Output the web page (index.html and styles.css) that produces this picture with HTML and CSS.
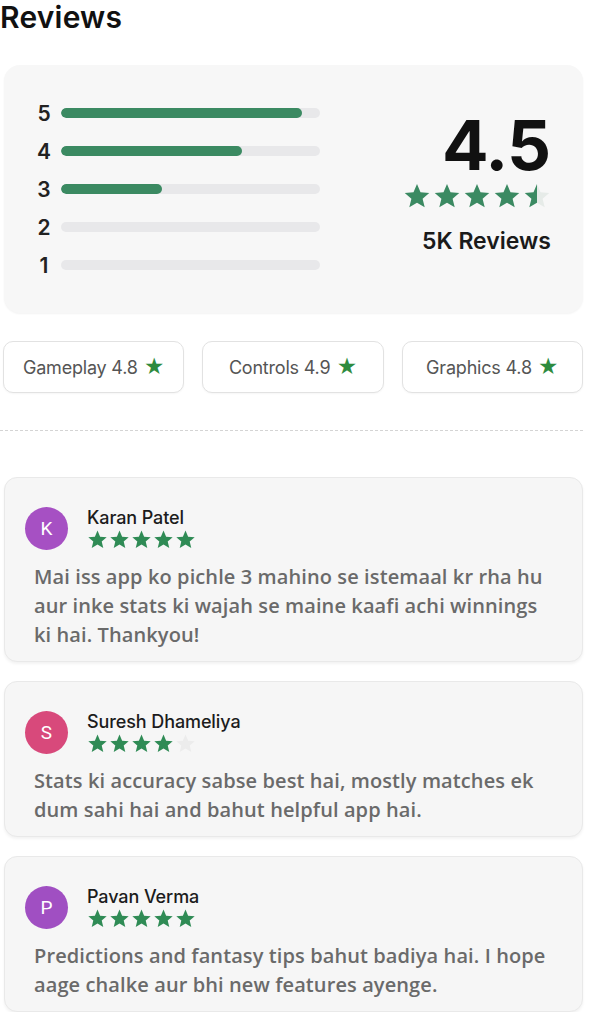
FILE: index.html
```html
<!DOCTYPE html>
<html>
<head>
  <meta charset="utf-8">
  <link rel="stylesheet" href="styles.css">
</head>
<body>
<svg width="0" height="0" class="defs">
  <defs>
    <symbol id="star" viewBox="0 0 24 24">
      <path d="M12 1.8l3 7 7.5.6-5.7 4.9 1.8 7.4L12 17.7l-6.6 4 1.8-7.4-5.7-4.9 7.5-.6z"/>
    </symbol>
    <linearGradient id="half">
      <stop offset="52%" stop-color="#3b8a62"/>
      <stop offset="52%" stop-color="#e6ebe8"/>
    </linearGradient>
  </defs>
</svg>

<div class="page">
  <h2 class="title">Reviews</h2>

  <!-- rating summary -->
  <div class="summary">
    <div class="bars">
      <div class="bar-row"><span class="num">5</span><div class="track"><div class="fill" style="width:93%"></div></div></div>
      <div class="bar-row"><span class="num">4</span><div class="track"><div class="fill" style="width:70%"></div></div></div>
      <div class="bar-row"><span class="num">3</span><div class="track"><div class="fill" style="width:39%"></div></div></div>
      <div class="bar-row"><span class="num">2</span><div class="track"></div></div>
      <div class="bar-row"><span class="num">1</span><div class="track"></div></div>
    </div>
    <div class="score">
      <div class="big">4.5</div>
      <div class="stars stars-big">
        <svg><use href="#star"/></svg>
        <svg><use href="#star"/></svg>
        <svg><use href="#star"/></svg>
        <svg><use href="#star"/></svg>
        <svg class="half"><use href="#star"/></svg>
      </div>
      <div class="count">5K Reviews</div>
    </div>
  </div>

  <!-- category chips -->
  <div class="chips">
    <div class="chip">Gameplay 4.8 <span class="chip-star">★</span></div>
    <div class="chip">Controls 4.9 <span class="chip-star">★</span></div>
    <div class="chip">Graphics 4.8 <span class="chip-star">★</span></div>
  </div>

  <hr class="divider">

  <!-- review list -->
  <div class="review">
    <div class="review-head">
      <div class="avatar purple">K</div>
      <div>
        <div class="name">Karan Patel</div>
        <div class="stars">
          <svg><use href="#star"/></svg><svg><use href="#star"/></svg><svg><use href="#star"/></svg><svg><use href="#star"/></svg><svg><use href="#star"/></svg>
        </div>
      </div>
    </div>
    <p class="text">Mai iss app ko pichle 3 mahino se istemaal kr rha hu aur inke stats ki wajah se maine kaafi achi winnings ki hai. Thankyou!</p>
  </div>

  <div class="review">
    <div class="review-head">
      <div class="avatar pink">S</div>
      <div>
        <div class="name">Suresh Dhameliya</div>
        <div class="stars">
          <svg><use href="#star"/></svg><svg><use href="#star"/></svg><svg><use href="#star"/></svg><svg><use href="#star"/></svg><svg class="off"><use href="#star"/></svg>
        </div>
      </div>
    </div>
    <p class="text">Stats ki accuracy sabse best hai, mostly matches ek dum sahi hai and bahut helpful app hai.</p>
  </div>

  <div class="review">
    <div class="review-head">
      <div class="avatar violet">P</div>
      <div>
        <div class="name">Pavan Verma</div>
        <div class="stars">
          <svg><use href="#star"/></svg><svg><use href="#star"/></svg><svg><use href="#star"/></svg><svg><use href="#star"/></svg><svg><use href="#star"/></svg>
        </div>
      </div>
    </div>
    <p class="text">Predictions and fantasy tips bahut badiya hai. I hope aage chalke aur bhi new features ayenge.</p>
  </div>
</div>
</body>
</html>
```

FILE: styles.css
```css
*{
  box-sizing: border-box;
}
body{
  margin: 0;
  background: #fff;
  font-family: "Inter", "Liberation Sans", sans-serif;
  color: #111;
}
.defs{
  position: absolute;
}

.page{
  width: 594px;
  padding: 0 11px 0 4px;
}

.title{
  margin: 0 0 0 -4px;
  font-size: 30px;
  line-height: 34px;
  font-weight: 600;
  letter-spacing: 0.2px;
}

/* Summary card */
.summary{
  margin-top: 31px;
  height: 248px;
  display: flex;
  justify-content: space-between;
  align-items: center;
  padding: 0 32px 0 33px;
  background: #f7f7f7;
  border-radius: 16px;
  box-shadow: 0 1px 2px rgba(0,0,0,0.05);
}
.bars{
  display: flex;
  flex-direction: column;
  gap: 10px;
}
.bar-row{
  height: 28px;
  display: flex;
  align-items: center;
  gap: 10px;
}
.num{
  width: 14px;
  text-align: center;
  font-size: 21px;
  font-weight: 600;
  color: #222;
}
.track{
  width: 259px;
  height: 10px;
  border-radius: 5px;
  background: #e8e8ea;
  overflow: hidden;
}
.fill{
  height: 100%;
  border-radius: 5px;
  background: #3b8a62;
}

.score{
  display: flex;
  flex-direction: column;
  align-items: flex-end;
  margin-bottom: 11px;
}
.big{
  font-size: 69px;
  font-weight: 700;
  line-height: 66px;
  letter-spacing: -1px;
  margin-right: 1px;
}
.stars{
  display: flex;
  gap: 1px;
  fill: #2f8b55;
}
.stars svg{
  width: 21px;
  height: 21px;
}
.stars-big{
  margin-top: 4px;
  gap: 2px;
  fill: #3b8a62;
}
.stars-big svg{
  width: 28px;
  height: 28px;
}
.stars .half{
  fill: url(#half);
}
.stars .off{
  fill: #ececec;
}
.count{
  margin-top: 17px;
  font-size: 23px;
  font-weight: 600;
  color: #1a1a1a;
}

/* Chips */
.chips{
  margin: 28px 0 0 -1px;
  display: flex;
  gap: 18px;
}
.chip{
  flex: 1;
  height: 52px;
  display: flex;
  align-items: center;
  justify-content: center;
  gap: 6px;
  background: #fff;
  border: 1px solid #e2e2e2;
  border-radius: 10px;
  box-shadow: 0 1px 2px rgba(0,0,0,0.04);
  font-size: 18px;
  letter-spacing: -0.2px;
  color: #555;
}
.chip-star{
  color: #2e8b3e;
  font-size: 20px;
}

.divider{
  margin: 37px 0 0 -4px;
  border: 0;
  border-top: 1.5px dashed #d4d4d4;
}

/* Review cards */
.review{
  margin-top: 46px;
  padding: 29px 25px 12px 20px;
  background: #f6f6f6;
  border: 1px solid #e9e9e9;
  border-radius: 13px;
  box-shadow: 0 2px 3px rgba(0,0,0,0.05);
}
.review + .review{
  margin-top: 19px;
}
.review-head{
  display: flex;
  align-items: center;
  gap: 19px;
}
.avatar{
  width: 43px;
  height: 43px;
  border-radius: 50%;
  display: flex;
  align-items: center;
  justify-content: center;
  color: #fff;
  font-size: 19px;
  font-family: "Roboto", sans-serif;
}
.purple{ background: #a650c3; }
.pink{ background: #d8497b; }
.violet{ background: #a04fc2; }
.name{
  font-size: 18px;
  font-weight: 500;
  letter-spacing: -0.1px;
  color: #1c1c1c;
  margin-bottom: 1px;
}
.text{
  margin: 12px 0 0 9px;
  font-family: "Open Sans", sans-serif;
  font-size: 20px;
  font-weight: 600;
  letter-spacing: 0.1px;
  line-height: 29px;
  color: #6a6a6a;
}
```
